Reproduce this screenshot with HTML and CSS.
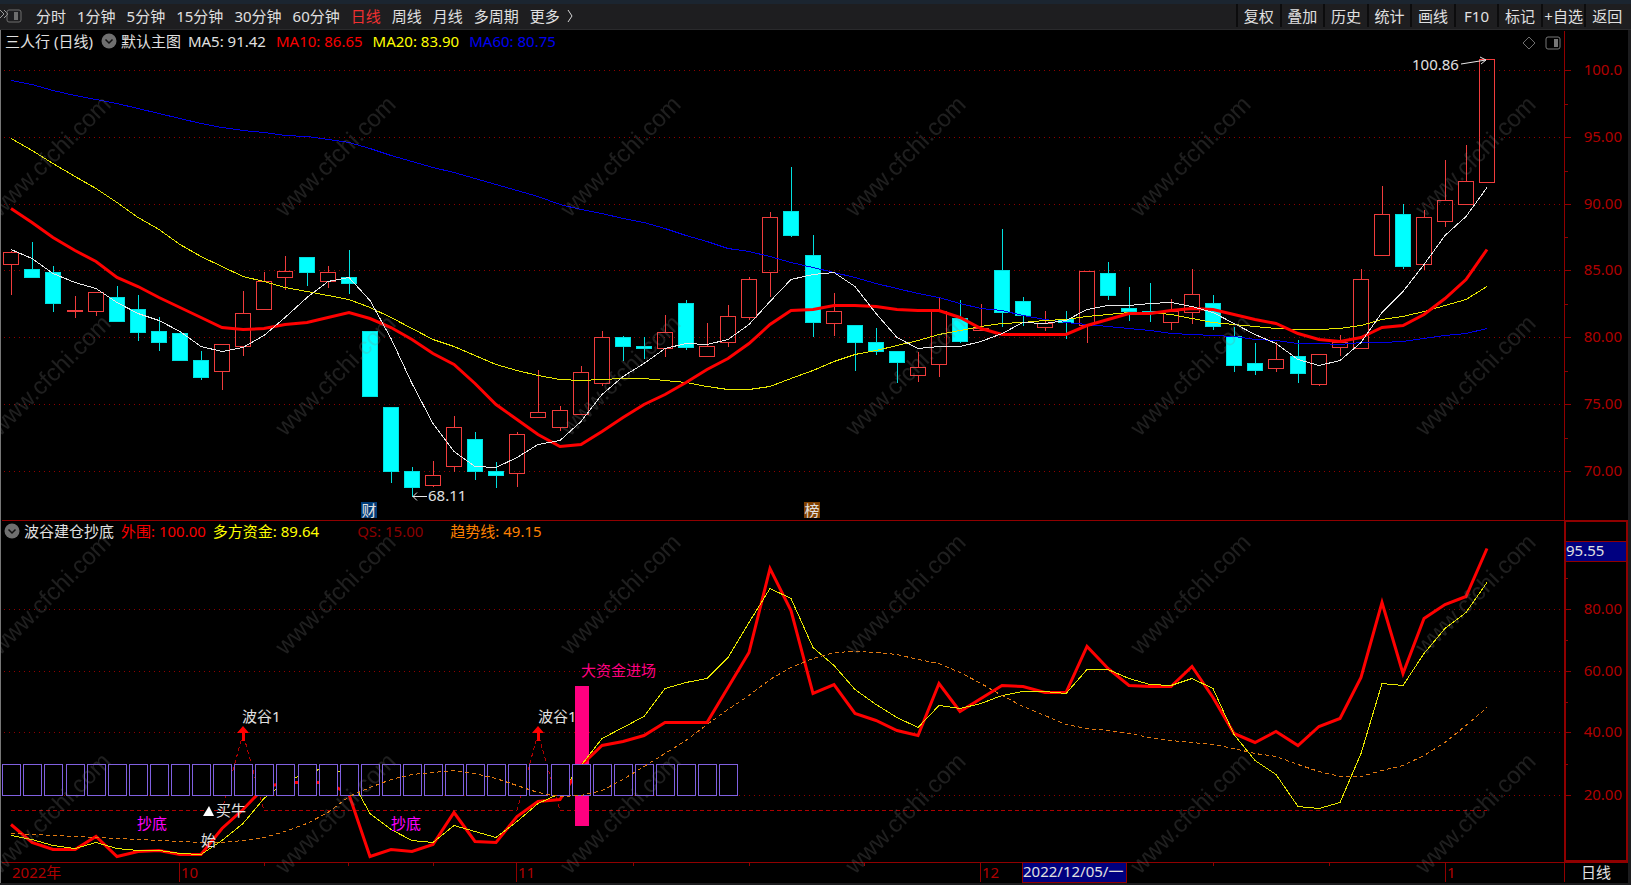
FILE: index.html
```
<!DOCTYPE html>
<html lang="zh-CN">
  <head>
    <meta charset="UTF-8" />
    <meta name="viewport" content="width=device-width, initial-scale=1.0" />
    <title>三人行 日线</title>
    <link rel="stylesheet" href="styles.css">
  </head>
  <body>
    <header class="toolbar">
      <button type="button" class="dock-btn" aria-label="侧栏">
        <svg width="24" height="16" viewBox="0 0 24 16">
          <path d="M0 2l4 4-4 4M4 2l4 4-4 4" fill="none" stroke="#9a9a9a" />
          <rect x="7" y="2" width="14" height="12" rx="2" fill="none" stroke="#6e6e6e" />
          <rect x="14" y="4" width="4" height="8" fill="#6e6e6e" />
        </svg>
      </button>
      <nav class="periods">
        <button type="button">分时</button>
        <button type="button">1分钟</button>
        <button type="button">5分钟</button>
        <button type="button">15分钟</button>
        <button type="button">30分钟</button>
        <button type="button">60分钟</button>
        <button type="button" class="active">日线</button>
        <button type="button">周线</button>
        <button type="button">月线</button>
        <button type="button">多周期</button>
        <button type="button" class="more">更多
          <svg width="8" height="14" viewBox="0 0 8 14"><path d="M2 1l4 6-4 6" fill="none" stroke="#d8d8d8" /></svg>
        </button>
      </nav>
      <div class="tools">
        <button type="button">复权</button>
        <button type="button">叠加</button>
        <button type="button">历史</button>
        <button type="button">统计</button>
        <button type="button">画线</button>
        <button type="button">F10</button>
        <button type="button">标记</button>
        <button type="button">+自选</button>
        <button type="button">返回</button>
      </div>
    </header>

    <main class="charts">
      <section class="panel">
        <div class="legend">
          <span class="stock">三人行 (日线)</span>
          <button type="button" class="round-btn" aria-label="主图菜单">
            <svg width="16" height="16" viewBox="0 0 16 16"><circle cx="8" cy="8" r="7.500" fill="#6f6f6f" /><path d="M4.500 6.500L8 10l3.500-3.500" fill="none" stroke="#111" stroke-width="1.500" /></svg>
          </button>
          <span>默认主图</span>
          <div class="averages">
            <span>MA5: 91.42</span>
            <span class="red">MA10: 86.65</span>
            <span class="yellow">MA20: 83.90</span>
            <span class="blue">MA60: 80.75</span>
          </div>
        </div>
        <div class="corner">
          <svg width="14" height="14" viewBox="0 0 14 14"><path d="M7 1l6 6-6 6-6-6z" fill="none" stroke="#6e6e6e" /></svg>
          <svg width="16" height="14" viewBox="0 0 16 14"><rect x="1" y="1" width="14" height="12" rx="2" fill="none" stroke="#777" /><rect x="9" y="3" width="4" height="8" fill="#777" /></svg>
        </div>
        <svg class="plot" id="main-plot" viewBox="0 30 1631 490"></svg>
      </section>

      <section class="panel">
        <div class="legend">
          <button type="button" class="round-btn" aria-label="指标菜单">
            <svg width="16" height="16" viewBox="0 0 16 16"><circle cx="8" cy="8" r="7.500" fill="#6f6f6f" /><path d="M4.500 6.500L8 10l3.500-3.500" fill="none" stroke="#111" stroke-width="1.500" /></svg>
          </button>
          <span>波谷建仓抄底</span>
          <span class="red">外围: 100.00</span>
          <span class="yellow">多方资金: 89.64</span>
          <span class="dark-red">QS: 15.00</span>
          <span class="orange">趋势线: 49.15</span>
        </div>
        <svg class="plot" id="sub-plot" viewBox="0 520 1631 342"></svg>
      </section>

      <svg class="plot" id="time-axis" viewBox="0 862 1631 23"></svg>

      <svg class="watermark" aria-hidden="true">
        <defs>
          <pattern id="mark" patternUnits="userSpaceOnUse" x="-33" y="1" width="285" height="219">
            <text x="0" y="0" transform="translate(33 187) rotate(-45)">www.cfchi.com</text>
          </pattern>
        </defs>
        <rect width="100%" height="100%" fill="url(#mark)" />
      </svg>
    </main>

    <script src="chart.js"></script>
  </body>
</html>
```
FILE: styles.css
```
* {
  box-sizing: border-box;
}

body {
  margin: 0;
  background-color: #000;
  color: #e0e0e0;
  font-family: "Noto Sans", "Noto Sans CJK SC", sans-serif;
  font-size: 15px;
  line-height: 20px;
}

button {
  padding: 0;
  border: none;
  background: none;
  color: inherit;
  font: inherit;
  white-space: nowrap;
  cursor: pointer;
}

.toolbar {
  display: flex;
  align-items: stretch;
  height: 30px;
  padding: 0 3px 2px 0;
  background-color: #1e1e20;
  border-top: 4px solid #1b2530;
  border-bottom: 1px solid #2a2a2c;
}

.dock-btn {
  display: flex;
  align-items: center;
  width: 36px;
}

.periods {
  display: flex;
  flex: 1;
  gap: 11px;
}

.periods .active {
  color: #f03030;
}

.more {
  display: flex;
  align-items: center;
  gap: 6px;
}

.tools {
  display: grid;
  grid-template-columns: repeat(9, 1fr);
  width: 392px;
}

.tools button {
  overflow: hidden;
  border-left: 2px solid #0c0c0d;
}

.charts {
  position: relative;
}

.panel {
  position: relative;
}

.legend {
  position: absolute;
  top: 0;
  left: 4px;
  display: flex;
  align-items: center;
  gap: 7px;
  height: 22px;
}

.averages {
  display: flex;
  gap: 10px;
}

.stock {
  padding: 0 1px;
}

.round-btn {
  display: flex;
}

.round-btn + span {
  margin-left: -3px;
}

.corner {
  position: absolute;
  top: 6px;
  right: 70px;
  display: flex;
  gap: 9px;
}

.red {
  color: #f80000;
}

.yellow {
  color: #ffff00;
}

.blue {
  color: #0000f0;
}

.dark-red {
  margin-left: 31px;
  color: #8c0000;
}

.orange {
  margin-left: 20px;
  color: #ff8000;
}

.plot {
  display: block;
  width: 100%;
  height: auto;
}

.plot line,
.plot rect,
.plot polyline {
  shape-rendering: crispEdges;
  fill: none;
}

.plot text {
  fill: #e0e0e0;
}

.plot .scale {
  fill: #b00000;
}

.plot .magenta {
  fill: #ff00ff;
}

.plot .pink {
  fill: #ff0080;
}

.plot .frame {
  stroke: #900000;
}

.plot .frame-thick {
  stroke: #900000;
  stroke-width: 2;
}

.plot .grid {
  stroke: #900000;
  stroke-dasharray: 1 4;
}

.plot .up {
  stroke: #f03c3c;
}

.plot .down {
  stroke: #00e0e0;
}

.plot rect.down {
  fill: #00ffff;
}

.plot .ma5 {
  stroke: #e8e8e8;
}

.plot .ma10 {
  stroke: #ff0000;
  stroke-width: 3;
  shape-rendering: auto;
}

.plot .ma20 {
  stroke: #e8e800;
}

.plot .ma60 {
  stroke: #0000e8;
}

.plot .qs {
  stroke: #b00000;
  stroke-dasharray: 4 3;
}

.plot .trend {
  stroke: #e07810;
  stroke-dasharray: 4 3;
}

.plot .box {
  fill: #000;
  stroke: #8060e0;
}

.plot .bar {
  fill: #ff0080;
}

.plot .badge-blue {
  fill: #003c78;
}

.plot .badge-brown {
  fill: #804000;
}

.plot .cursor {
  fill: #000080;
  stroke: #900000;
}

.plot .edge {
  fill: #777;
}

.plot .gutter {
  fill: #1c1c1e;
}

.plot .arrow {
  fill: none;
  stroke: #e8e8e8;
}

.plot .arrow-up {
  fill: #ff0000;
}

.watermark {
  position: absolute;
  top: 0;
  left: 0;
  width: 100%;
  height: 100%;
  pointer-events: none;
}

.watermark text {
  fill: #808080;
  fill-opacity: 0.24;
  font-family: "Liberation Sans", Arial, sans-serif;
  font-size: 24px;
}
```
FILE: chart.js
```
const NS = "http://www.w3.org/2000/svg";
const FIRST_X = 11.3;
const STEP = 21.086;
const AXIS_X = 1564.5;

// direction, high, body top, body bottom, low
const candles = [
  ["u", 251, 252, 264, 295], ["d", 242, 269, 277, 277], ["d", 266, 272, 303, 312],
  ["u", 296, 310, 311, 318], ["u", 292, 292, 311, 316], ["d", 286, 297, 321, 321],
  ["d", 295, 309, 332, 341], ["d", 317, 331, 342, 351], ["d", 332, 333, 360, 361],
  ["d", 351, 360, 377, 380], ["u", 344, 344, 371, 390], ["u", 291, 313, 346, 356],
  ["u", 272, 281, 309, 309], ["u", 256, 271, 277, 290], ["d", 257, 257, 272, 286],
  ["u", 266, 272, 281, 288], ["d", 250, 277, 283, 294], ["d", 331, 331, 396, 396],
  ["d", 407, 407, 471, 483], ["d", 467, 471, 487, 497], ["u", 461, 475, 485, 487],
  ["u", 416, 427, 466, 472], ["d", 432, 439, 471, 480], ["d", 462, 471, 475, 488],
  ["u", 432, 434, 473, 487], ["u", 370, 412, 417, 417], ["u", 406, 410, 427, 431],
  ["u", 366, 372, 414, 414], ["u", 331, 337, 383, 386], ["d", 336, 337, 346, 361],
  ["d", 337, 346, 348, 359], ["u", 315, 332, 348, 357], ["d", 300, 303, 347, 350],
  ["u", 323, 346, 356, 356], ["u", 305, 316, 342, 347], ["u", 277, 279, 317, 320],
  ["u", 212, 217, 272, 297], ["d", 167, 211, 235, 237], ["d", 235, 255, 322, 337],
  ["u", 293, 311, 323, 336], ["d", 325, 325, 342, 371], ["d", 328, 342, 351, 355],
  ["d", 351, 351, 362, 383], ["u", 352, 367, 375, 382], ["u", 298, 311, 364, 377],
  ["d", 300, 318, 341, 343], ["u", 304, 328, 330, 330], ["d", 229, 270, 312, 327],
  ["d", 297, 301, 315, 326], ["u", 311, 323, 327, 331], ["d", 311, 319, 322, 339],
  ["u", 271, 271, 325, 343], ["d", 262, 273, 295, 300], ["d", 287, 308, 311, 321],
  ["d", 283, 311, 312, 322], ["u", 299, 311, 322, 330], ["u", 269, 294, 312, 324],
  ["d", 295, 303, 326, 330], ["d", 327, 336, 365, 372], ["d", 343, 363, 370, 375],
  ["u", 342, 359, 368, 372], ["d", 340, 356, 373, 383], ["u", 354, 354, 384, 386],
  ["u", 335, 342, 347, 356], ["u", 269, 279, 348, 348], ["u", 186, 214, 255, 255],
  ["d", 204, 214, 266, 269], ["u", 210, 217, 264, 270], ["u", 160, 200, 221, 227],
  ["u", 145, 181, 204, 204], ["u", 59, 59, 182, 182],
];

const ma5 = [
  249, 258, 273, 282, 288, 302, 313, 320, 331, 346, 351, 347, 335, 317, 297, 281, 277, 300,
  338, 383, 423, 451, 466, 467, 457, 444, 440, 421, 394, 376, 363, 348, 343, 344, 339, 324,
  301, 279, 274, 272, 286, 313, 337, 348, 346, 346, 341, 333, 322, 323, 320, 309, 305, 305,
  303, 302, 306, 312, 323, 334, 343, 359, 365, 360, 342, 312, 291, 264, 235, 216, 187,
];

const ma10 = [
  208, 222, 237, 250, 261, 277, 286, 297, 307, 317, 327, 329, 328, 324, 322, 317, 312, 318,
  327, 339, 353, 364, 383, 404, 419, 434, 446, 444, 431, 417, 404, 394, 382, 369, 358, 343,
  324, 310, 309, 305, 305, 306, 309, 310, 310, 317, 328, 334, 334, 334, 334, 325, 319, 313,
  313, 310, 308, 309, 314, 319, 323, 333, 339, 341, 337, 327, 325, 314, 298, 279, 249,
];

const ma20 = [
  138, 150, 163, 176, 188, 202, 217, 229, 244, 256, 266, 276, 281, 287, 291, 295, 299, 307,
  317, 328, 339, 346, 355, 364, 370, 375, 379, 380, 379, 378, 378, 380, 382, 386, 389, 389,
  386, 378, 370, 361, 354, 350, 345, 340, 334, 330, 326, 323, 322, 320, 319, 316, 314, 312,
  312, 314, 318, 322, 324, 326, 328, 329, 329, 328, 325, 319, 316, 311, 305, 299, 286,
];

const ma60 = [
  80, 84, 90, 95, 99, 103, 108, 113, 118, 123, 127, 130, 132, 135, 136, 139, 142, 148,
  155, 161, 167, 172, 178, 184, 190, 196, 204, 209, 213, 218, 222, 228, 235, 241, 248, 251,
  256, 262, 267, 272, 277, 283, 288, 293, 297, 303, 308, 310, 315, 319, 322, 324, 326, 328,
  330, 333, 334, 335, 336, 339, 340, 343, 343, 344, 342, 342, 341, 338, 335, 333, 328,
];

const outer = [
  824, 842, 849, 849, 836, 856, 851, 850, 854, 854, 828, 809, 787, 782, 782, 782, 794, 856,
  849, 851, 844, 812, 841, 842, 816, 801, 799, 765, 745, 741, 735, 722, 722, 722, 687, 652,
  568, 610, 693, 684, 713, 720, 730, 735, 683, 711, 698, 685, 686, 692, 692, 646, 668, 685,
  686, 686, 666, 697, 733, 742, 731, 745, 726, 718, 677, 602, 673, 618, 604, 596, 548,
];

const funds = [
  835, 839, 845, 848, 842, 848, 850, 850, 853, 854, 840, 823, 798, 782, 772, 767, 775, 813,
  829, 840, 842, 825, 831, 837, 821, 803, 793, 765, 738, 727, 716, 688, 682, 678, 657, 622,
  588, 598, 647, 665, 689, 704, 717, 727, 705, 708, 703, 695, 691, 691, 693, 669, 669, 678,
  684, 685, 678, 688, 734, 760, 774, 806, 808, 802, 753, 683, 685, 653, 628, 612, 582,
];

const trend = [
  833, 834, 835, 836, 837, 838, 839, 840, 841, 842, 842, 840, 837, 831, 823, 812, 796, 787,
  779, 774, 772, 770, 773, 778, 785, 792, 796, 795, 790, 779, 766, 753, 740, 724, 709, 695,
  679, 667, 658, 652, 651, 652, 654, 659, 663, 672, 683, 695, 706, 715, 724, 728, 730, 733,
  737, 740, 742, 744, 748, 753, 756, 764, 771, 776, 776, 770, 765, 755, 742, 725, 707,
];

// flat at 15 with two spikes where a trough is signalled
const qs = candles.map((c, i) => (i === 11 || i === 25 ? 733 : 810));

const xAt = (i) => Math.round(FIRST_X + i * STEP);

function add(parent, tag, attrs, text) {
  const el = document.createElementNS(NS, tag);
  for (const key in attrs) {
    el.setAttribute(key, attrs[key]);
  }
  if (text) {
    el.textContent = text;
  }
  parent.appendChild(el);
}

function line(parent, cls, x1, y1, x2, y2) {
  add(parent, "line", { class: cls, x1, y1, x2, y2 });
}

function rect(parent, cls, x, y, width, height) {
  add(parent, "rect", { class: cls, x, y, width, height });
}

function label(parent, x, y, text, cls = "", anchor = "start") {
  add(parent, "text", { class: cls, x, y, "text-anchor": anchor }, text);
}

function series(parent, cls, values) {
  const points = values.map((y, i) => `${xAt(i)},${y + 0.5}`).join(" ");
  add(parent, "polyline", { class: cls, points });
}

function edges(parent, top, height) {
  rect(parent, "edge", 0, top, 1, height);
  rect(parent, "gutter", 1628, top, 3, height);
}

function scale(parent, marks) {
  marks.forEach(([y, text], i) => {
    line(parent, "grid", 4, y + 0.5, AXIS_X, y + 0.5);
    line(parent, "frame", AXIS_X, y + 0.5, 1571, y + 0.5);
    label(parent, 1622, y + 5, text, "scale", "end");
    if (i < marks.length - 1) {
      const mid = Math.round((y + marks[i + 1][0]) / 2) + 0.5;
      line(parent, "frame", AXIS_X, mid, 1568, mid);
    }
  });
}

function drawMain(svg) {
  edges(svg, 30, 490);
  scale(svg, [
    [70, "100.0"], [137, "95.00"], [204, "90.00"], [270, "85.00"],
    [337, "80.00"], [404, "75.00"], [471, "70.00"],
  ]);
  line(svg, "frame", AXIS_X, 31, AXIS_X, 520);

  candles.forEach(([dir, high, top, bottom, low], i) => {
    const x = xAt(i);
    const cls = dir === "u" ? "up" : "down";
    line(svg, cls, x + 0.5, high, x + 0.5, top);
    line(svg, cls, x + 0.5, bottom, x + 0.5, low);
    rect(svg, cls, x - 7.5, top + 0.5, 15, bottom - top);
  });

  series(svg, "ma60", ma60);
  series(svg, "ma20", ma20);
  series(svg, "ma10", ma10);
  series(svg, "ma5", ma5);

  label(svg, 1412, 70, "100.86");
  add(svg, "path", { class: "arrow", d: "M1461 64L1486 60M1480 57L1486 60L1481 64" });
  label(svg, 428, 501, "68.11");
  add(svg, "path", { class: "arrow", d: "M427 496.500H413M417 492.500L413 496.500L417 500.500" });

  rect(svg, "badge-blue", 361, 502, 16, 16);
  label(svg, 369, 516, "财", "", "middle");
  rect(svg, "badge-brown", 804, 502, 16, 16);
  label(svg, 812, 516, "榜", "", "middle");
}

function drawSub(svg) {
  edges(svg, 520, 342);
  scale(svg, [[609, "80.00"], [671, "60.00"], [732, "40.00"], [795, "20.00"]]);
  line(svg, "frame", AXIS_X, 578.5, 1568, 578.5);
  line(svg, "frame", 2, 520.5, AXIS_X, 520.5);
  rect(svg, "frame-thick", 1565, 521, 62, 340);
  rect(svg, "cursor", 1565.5, 541.5, 61, 20);
  label(svg, 1566, 556, "95.55");

  series(svg, "qs", qs);
  label(svg, 242, 722, "波谷1");
  label(svg, 538, 722, "波谷1");
  rect(svg, "bar", 575, 686, 14, 140);
  series(svg, "ma10", outer);
  series(svg, "ma20", funds);

  for (let i = 0; i < 35; i++) {
    rect(svg, "box", xAt(i) - 8.5, 764.5, 18, 31);
  }
  series(svg, "trend", trend);

  for (const i of [11, 25]) {
    const x = xAt(i);
    add(svg, "path", { class: "arrow-up", d: `M${x} 726l6 7h-4v8h-3v-8h-5z` });
  }

  label(svg, 581, 676, "大资金进场", "pink");
  label(svg, 137, 829, "抄底", "magenta");
  label(svg, 391, 829, "抄底", "magenta");
  add(svg, "path", { d: "M203 816l6-10l5 10z", fill: "#fff" });
  label(svg, 216, 816, "买牛");
  label(svg, 201, 846, "始");
}

function drawTimeAxis(svg) {
  edges(svg, 862, 21);
  rect(svg, "gutter", 0, 883, 1631, 2);
  line(svg, "frame", 2, 862.5, 1628, 862.5);
  line(svg, "frame", AXIS_X, 862, AXIS_X, 882);
  for (const x of [264, 348, 433, 633, 749, 864, 1213, 1329]) {
    line(svg, "frame", x + 0.5, 863, x + 0.5, 866);
  }
  label(svg, 12, 878, "2022年", "scale");
  for (const [x, month] of [[179, "10"], [516, "11"], [980, "12"], [1445, "1"]]) {
    line(svg, "frame", x + 0.5, 863, x + 0.5, 882);
    label(svg, x + 2, 878, month, "scale");
  }
  rect(svg, "cursor", 1022.5, 862.5, 104, 20);
  label(svg, 1023, 877, "2022/12/05/一");
  label(svg, 1581, 878, "日线");
}

drawMain(document.getElementById("main-plot"));
drawSub(document.getElementById("sub-plot"));
drawTimeAxis(document.getElementById("time-axis"));
```
